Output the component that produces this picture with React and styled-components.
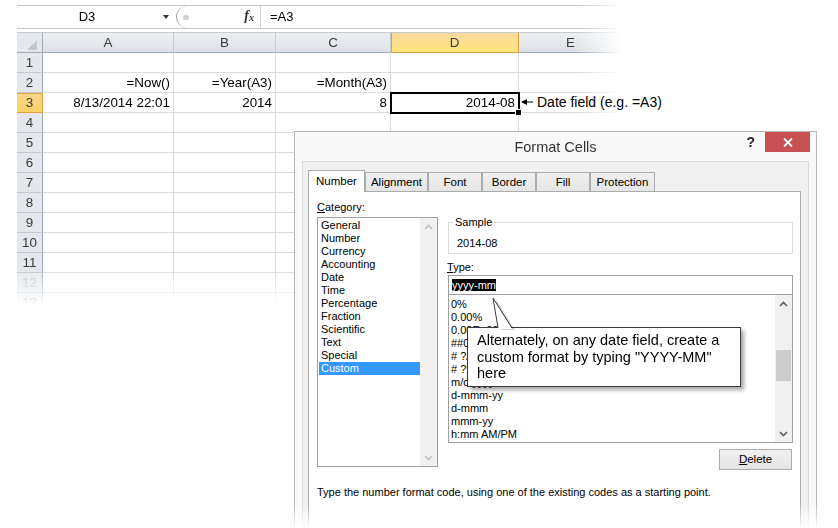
import React from "react"
import styled, { createGlobalStyle } from "styled-components"

const GlobalStyle = createGlobalStyle`
  html, body {
    margin: 0;
    padding: 0;
    background: #fff;
  }
  body {
    font-family: "Liberation Sans", Arial, sans-serif;
  }
`

const columns = ["A", "B", "C", "D", "E"]

const rows = [
  ["", "", "", "", ""],
  ["=Now()", "=Year(A3)", "=Month(A3)", "", ""],
  ["8/13/2014 22:01", "2014", "8", "2014-08", ""],
  ["", "", "", "", ""],
  ["", "", "", "", ""],
  ["", "", "", "", ""],
  ["", "", "", "", ""],
  ["", "", "", "", ""],
  ["", "", "", "", ""],
  ["", "", "", "", ""],
  ["", "", "", "", ""],
  ["", "", "", "", ""],
  ["", "", "", "", ""],
]

const categories = [
  "General",
  "Number",
  "Currency",
  "Accounting",
  "Date",
  "Time",
  "Percentage",
  "Fraction",
  "Scientific",
  "Text",
  "Special",
  "Custom",
]

const formats = [
  "0%",
  "0.00%",
  "0.00E+00",
  "##0.0E+0",
  "# ?/?",
  "# ??/??",
  "m/d/yyyy",
  "d-mmm-yy",
  "d-mmm",
  "mmm-yy",
  "h:mm AM/PM",
]

const tabs = [
  { label: "Number", width: 57 },
  { label: "Alignment", width: 63 },
  { label: "Font", width: 54 },
  { label: "Border", width: 54 },
  { label: "Fill", width: 54 },
  { label: "Protection", width: 65 },
]

const Chevron = ({ up, color }) => (
  <svg width="9" height="6" viewBox="0 0 9 6">
    <polyline
      points={up ? "1,5 4.5,1.5 8,5" : "1,1 4.5,4.5 8,1"}
      fill="none"
      stroke={color}
      strokeWidth="1.7"
    />
  </svg>
)

const App = () => {
  return (
    <Stage>
      <GlobalStyle />
      <FadeRight>
        <FadeBottom>
          <FormulaBar>
            <NameBox>
              <NameText>D3</NameText>
              <Caret />
            </NameBox>
            <Handle>
              <Dot />
              <Fx>
                f<sub>x</sub>
              </Fx>
            </Handle>
            <Formula>=A3</Formula>
          </FormulaBar>
          <BarGap />
          <Grid>
            <Corner>
              <CornerMark />
            </Corner>
            {columns.map(col => (
              <ColHead key={col} $active={col === "D"}>
                {col}
              </ColHead>
            ))}
            {rows.map((row, r) => (
              <React.Fragment key={r}>
                <RowHead $active={r === 2} $faded={r === 11}>
                  {r + 1}
                </RowHead>
                {row.map((value, c) => (
                  <Cell key={c} $selected={r === 2 && c === 3}>
                    {value}
                  </Cell>
                ))}
              </React.Fragment>
            ))}
          </Grid>
        </FadeBottom>
      </FadeRight>

      <Note>
        <svg width="14" height="8" viewBox="0 0 14 8">
          <polygon points="0,4 6,1 6,7" fill="#000" />
          <line x1="5" y1="4" x2="12" y2="4" stroke="#000" strokeWidth="1" />
        </svg>
        <span>Date field (e.g. =A3)</span>
      </Note>

      <Dialog>
        <TitleBar>
          <span />
          <Title>Format Cells</Title>
          <Controls>
            <Help>?</Help>
            <Close>
              <svg width="10" height="9" viewBox="0 0 10 9">
                <line x1="1" y1="0.5" x2="9" y2="8.5" stroke="#fff" strokeWidth="1.8" />
                <line x1="9" y1="0.5" x2="1" y2="8.5" stroke="#fff" strokeWidth="1.8" />
              </svg>
            </Close>
          </Controls>
        </TitleBar>
        <Client>
          <Tabs>
            {tabs.map((tab, i) => (
              <Tab key={tab.label} $active={i === 0} style={{ width: tab.width }}>
                {tab.label}
              </Tab>
            ))}
          </Tabs>
          <Panel>
            <PanelBody>
              <div>
                <Label>
                  <u>C</u>ategory:
                </Label>
                <CategoryList>
                  <Items>
                    {categories.map(name => (
                      <Item key={name} $selected={name === "Custom"}>
                        {name}
                      </Item>
                    ))}
                  </Items>
                  <Scrollbar>
                    <ArrowBox>
                      <Chevron up color="#c2c2c2" />
                    </ArrowBox>
                    <Track />
                    <ArrowBox>
                      <Chevron color="#c2c2c2" />
                    </ArrowBox>
                  </Scrollbar>
                </CategoryList>
              </div>
              <RightColumn>
                <Sample>
                  <Legend>Sample</Legend>
                  <SampleValue>2014-08</SampleValue>
                </Sample>
                <TypeLabel>
                  <u>T</u>ype:
                </TypeLabel>
                <TypeInput>
                  <Selection>yyyy-mm</Selection>
                </TypeInput>
                <FormatList>
                  <Items $pad>
                    {formats.map(f => (
                      <Item key={f}>{f}</Item>
                    ))}
                  </Items>
                  <Scrollbar>
                    <ArrowBox>
                      <Chevron up color="#606060" />
                    </ArrowBox>
                    <Track>
                      <Thumb />
                    </Track>
                    <ArrowBox>
                      <Chevron color="#606060" />
                    </ArrowBox>
                  </Scrollbar>
                </FormatList>
                <ButtonRow>
                  <Button>
                    <u>D</u>elete
                  </Button>
                </ButtonRow>
              </RightColumn>
            </PanelBody>
            <Hint>
              Type the number format code, using one of the existing codes as a
              starting point.
            </Hint>
          </Panel>
        </Client>
      </Dialog>

      <Callout>
        <Pointer width="26" height="34" viewBox="0 0 26 34">
          <polygon points="6,2 11,33 25,33" fill="rgba(0,0,0,0.18)" />
          <polygon points="3,1 8,32 22,32" fill="#fff" />
          <polyline points="8,31 3,1 22,31" fill="none" stroke="#3a3a3a" strokeWidth="1" />
        </Pointer>
        Alternately, on any date field, create a
        <br />
        custom format by typing "YYYY-MM"
        <br />
        here
      </Callout>
    </Stage>
  )
}

export default App

const Stage = styled.div`
  position: relative;
  width: 838px;
  height: 528px;
  overflow: hidden;
  background: #fff;
`

const FadeRight = styled.div`
  width: 606px;
  margin: 5px 0 0 17px;
  box-shadow: -7px 0 7px -4px rgba(0, 0, 0, 0.12);
  -webkit-mask-image: linear-gradient(to right, #000 560px, transparent 606px);
  mask-image: linear-gradient(to right, #000 560px, transparent 606px);
`

const FadeBottom = styled.div`
  -webkit-mask-image: linear-gradient(to bottom, #000 264px, transparent 300px);
  mask-image: linear-gradient(to bottom, #000 264px, transparent 300px);
`

const FormulaBar = styled.div`
  display: flex;
  height: 22px;
  border-top: 1px solid #c6c6c6;
  border-bottom: 1px solid #c6c6c6;
  background: #fff;
  font-size: 13px;
  line-height: 22px;
  color: #000;
`

const NameBox = styled.div`
  display: flex;
  align-items: center;
  width: 158px;
`

const NameText = styled.span`
  width: 140px;
  text-align: center;
`

const Caret = styled.span`
  margin-left: 6px;
  width: 0;
  height: 0;
  border-left: 3.5px solid transparent;
  border-right: 3.5px solid transparent;
  border-top: 4px solid #333;
`

const Handle = styled.div`
  display: flex;
  align-items: center;
  justify-content: space-between;
  box-sizing: border-box;
  width: 85px;
  margin-left: 1px;
  padding: 0 6px 0 6px;
  border-left: 1px solid #a8a8a8;
  border-right: 1px solid #d2d2d2;
  border-radius: 11px 0 0 11px;
`

const Dot = styled.span`
  width: 6px;
  height: 5px;
  border-radius: 3px;
  background: #d0d0d0;
`

const Fx = styled.span`
  font-family: "Liberation Serif", "Times New Roman", serif;
  font-style: italic;
  font-weight: bold;
  font-size: 14px;
  color: #333;

  sub {
    font-size: 10px;
    vertical-align: -1px;
  }
`

const Formula = styled.div`
  padding-left: 9px;
`

const BarGap = styled.div`
  height: 3px;
`

const Grid = styled.div`
  display: grid;
  grid-template-columns: 26px 131px 102px 115px 128px 104px;
  grid-template-rows: 21px;
  grid-auto-rows: 20px;
  font-size: 13.4px;
`

const Cell = styled.div`
  position: relative;
  box-sizing: border-box;
  padding: 0 3px;
  border-right: 1px solid #dadcdd;
  border-bottom: 1px solid #dadcdd;
  line-height: 19px;
  text-align: right;
  white-space: nowrap;
  color: #000;
  ${p =>
    p.$selected &&
    `
    z-index: 1;
    outline: 2px solid #000;
    outline-offset: -1px;
    &::after {
      content: "";
      position: absolute;
      right: -4px;
      bottom: -4px;
      width: 5px;
      height: 5px;
      background: #000;
      border: 1px solid #fff;
    }
  `}
`

const Corner = styled.div`
  display: flex;
  align-items: flex-end;
  justify-content: flex-end;
  box-sizing: border-box;
  padding: 0 5px 2px 0;
  background: #e4e7ec;
  border-top: 1px solid #c9cdd2;
  border-right: 1px solid #9eabba;
  border-bottom: 1px solid #9eabba;
`

const CornerMark = styled.span`
  width: 0;
  height: 0;
  border-left: 10px solid transparent;
  border-bottom: 10px solid #c3c7cd;
`

const ColHead = styled.div`
  box-sizing: border-box;
  text-align: center;
  line-height: 19px;
  color: #3a3a3a;
  border-top: 1px solid #c9cdd2;
  border-right: 1px solid ${p => (p.$active ? "#e0a23e" : "#c4cad2")};
  border-bottom: 1px solid ${p => (p.$active ? "#e0a23e" : "#9eabba")};
  background: ${p =>
    p.$active
      ? "linear-gradient(#f9d99c, #fde57e)"
      : "linear-gradient(#eceff2, #dde1e6)"};
  box-shadow: ${p => (p.$active ? "inset 1px 0 0 #e0a23e" : "none")};
`

const RowHead = styled.div`
  box-sizing: border-box;
  text-align: center;
  line-height: 19px;
  color: ${p => (p.$faded ? "#b8bcc2" : "#3a3a3a")};
  border-right: 1px solid ${p => (p.$active ? "#e0a23e" : "#9eabba")};
  border-bottom: 1px solid ${p => (p.$active ? "#e0a23e" : "#c4cad2")};
  background: ${p =>
    p.$active ? "linear-gradient(#f9d68a, #fbd36a)" : "#e4e7ec"};
  box-shadow: ${p => (p.$active ? "inset 0 1px 0 #e0a23e" : "none")};
`

const Note = styled.div`
  position: absolute;
  left: 521px;
  top: 93px;
  display: flex;
  align-items: center;
  gap: 2px;
  font-size: 14px;
  line-height: 18px;
  color: #000;
  background: #fff;

  svg {
    margin-top: -1px;
  }
`

const Dialog = styled.div`
  position: absolute;
  left: 294px;
  top: 131px;
  display: flex;
  flex-direction: column;
  box-sizing: border-box;
  width: 523px;
  height: 420px;
  border: 1px solid #b6b6b6;
  background: #f9f9f9;
  box-shadow: 0 0 6px rgba(0, 0, 0, 0.12);
  -webkit-mask-image: linear-gradient(to bottom, #000 372px, transparent 398px);
  mask-image: linear-gradient(to bottom, #000 372px, transparent 398px);
  font-size: 11px;
  color: #000;
`

const TitleBar = styled.div`
  display: grid;
  grid-template-columns: 71px 1fr 71px;
  height: 29px;
`

const Title = styled.div`
  text-align: center;
  font-size: 14.5px;
  line-height: 31px;
  color: #333;
`

const Controls = styled.div`
  display: flex;
  align-items: flex-start;
  justify-content: flex-end;
  padding-right: 6px;
`

const Help = styled.span`
  margin-right: 10px;
  font-size: 14px;
  font-weight: bold;
  line-height: 21px;
  color: #222;
`

const Close = styled.div`
  display: flex;
  align-items: center;
  justify-content: center;
  flex: none;
  width: 45px;
  height: 20px;
  background: #c75050;
`

const Client = styled.div`
  flex: 1;
  margin: 0 7px;
  padding: 8px 7px 0 5px;
  border: 1px solid #dadada;
  border-bottom: none;
  background: #f0f0f0;
`

const Tabs = styled.div`
  display: flex;
  align-items: flex-end;
  height: 21px;
`

const Tab = styled.div`
  position: relative;
  box-sizing: border-box;
  height: ${p => (p.$active ? "22px" : "19px")};
  margin-bottom: ${p => (p.$active ? "-1px" : "0")};
  border: 1px solid #acacac;
  border-bottom: none;
  background: ${p => (p.$active ? "#fff" : "linear-gradient(#f0f0f0, #e5e5e5)")};
  z-index: ${p => (p.$active ? 1 : 0)};
  text-align: center;
  font-size: 11.5px;
  line-height: ${p => (p.$active ? "20px" : "18px")};
`

const Panel = styled.div`
  height: 340px;
  padding: 8px 7px 0 8px;
  border: 1px solid #acacac;
  background: #fff;
`

const PanelBody = styled.div`
  display: grid;
  grid-template-columns: 121px 1fr;
  column-gap: 10px;
`

const Label = styled.div`
  line-height: 14px;
  margin-bottom: 3px;
`

const ListBox = styled.div`
  display: flex;
  box-sizing: border-box;
  border: 1px solid #a0a0a0;
  background: #fff;
`

const CategoryList = styled(ListBox)`
  height: 250px;
`

const FormatList = styled(ListBox)`
  height: 149px;
  margin-top: -1px;
`

const Items = styled.div`
  flex: 1;
  padding: ${p => (p.$pad ? "3px 0 0 0" : "1px 0 0 1px")};
`

const Item = styled.div`
  height: 13px;
  padding-left: 2px;
  line-height: 13px;
  white-space: nowrap;
  background: ${p => (p.$selected ? "#3399ff" : "transparent")};
  color: ${p => (p.$selected ? "#fff" : "#000")};
`

const Scrollbar = styled.div`
  display: flex;
  flex-direction: column;
  width: 17px;
  background: #f0f0f0;
`

const ArrowBox = styled.div`
  display: flex;
  align-items: center;
  justify-content: center;
  height: 17px;
`

const Track = styled.div`
  flex: 1;
  padding-top: 38px;
`

const Thumb = styled.div`
  width: 15px;
  height: 31px;
  margin-left: 1px;
  background: #cdcdcd;
`

const RightColumn = styled.div`
  padding-top: 15px;
`

const Sample = styled.fieldset`
  margin: 0;
  padding: 7px 8px 3px 8px;
  border: 1px solid #dcdcdc;
`

const Legend = styled.legend`
  margin-left: -4px;
  padding: 0 2px;
  line-height: 14px;
`

const SampleValue = styled.div`
  line-height: 14px;
`

const TypeLabel = styled.div`
  margin: 6px 0 0 -1px;
  line-height: 14px;
`

const TypeInput = styled.div`
  display: flex;
  align-items: center;
  box-sizing: border-box;
  height: 20px;
  margin-top: 1px;
  padding-left: 3px;
  border: 1px solid #a0a0a0;
  background: #fff;
`

const Selection = styled.span`
  line-height: 12px;
  background: #000;
  color: #fff;
`

const ButtonRow = styled.div`
  display: flex;
  justify-content: flex-end;
  margin-top: 6px;
  padding-right: 1px;
`

const Button = styled.div`
  box-sizing: border-box;
  width: 73px;
  height: 21px;
  border: 1px solid #acacac;
  background: linear-gradient(#f0f0f0, #e5e5e5);
  text-align: center;
  font-size: 11.5px;
  line-height: 19px;
`

const Hint = styled.div`
  margin-top: 15px;
  line-height: 14px;
`

const Callout = styled.div`
  position: absolute;
  left: 467px;
  top: 327px;
  box-sizing: border-box;
  width: 274px;
  height: 60px;
  padding: 4px 10px 0 9px;
  border: 1px solid #3a3a3a;
  background: #fff;
  box-shadow: 3px 3px 4px rgba(0, 0, 0, 0.35);
  font-size: 14.5px;
  line-height: 16.5px;
  color: #000;
`

const Pointer = styled.svg`
  position: absolute;
  left: 22px;
  top: -31px;
`
